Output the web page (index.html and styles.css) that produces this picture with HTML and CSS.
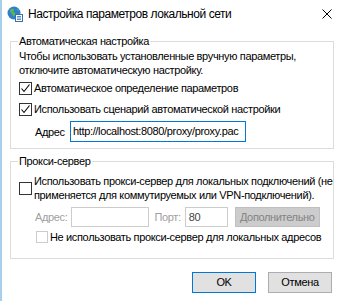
FILE: index.html
```html
<!DOCTYPE html>
<html>
<head lang="ru">
	<meta charset="UTF-8">
	<title>Настройка параметров локальной сети</title>
	<link rel="stylesheet" href="styles.css">
</head>
<body>
	<div id="window">
		<div class="titlebar">
			<svg class="app-icon" width="16" height="16" viewBox="0 0 16 16">
				<circle cx="7" cy="7" r="6.5" fill="#2f7fd0"/>
				<path d="M3 3.5c1.5-1 3-1 4 0c0.5 1-1 1.5-0.5 2.5c0.5 1 2 0.5 2 2c0 1-1 1.5-1.5 2.5c-1 0-1.5-1-1.5-2c0-1-1.5-1-2-2c-0.5-1 0-2.5-0.5-3z" fill="#5cb84a"/>
				<path d="M10 2.5c1 0.5 2 1.5 2.5 2.5c-1 0-1.5-1-2.5-1z" fill="#5cb84a"/>
				<rect x="8.5" y="8.5" width="7" height="7" fill="#fff" stroke="#3a6fb0"/>
				<path d="M10 10.5h4M10 12h4M10 13.5h4" stroke="#3a6fb0" stroke-width="0.8"/>
			</svg>
			<span class="title">Настройка параметров локальной сети</span>
			<svg class="close" width="10" height="10" viewBox="0 0 10 10">
				<path d="M0.5 0.5L9.5 9.5M9.5 0.5L0.5 9.5" stroke="#000" stroke-width="1"/>
			</svg>
		</div>

		<div class="body">
			<fieldset class="group group-auto">
				<legend>Автоматическая настройка</legend>
				<p class="note">Чтобы использовать установленные вручную параметры,<br>отключите автоматическую настройку.</p>
				<label class="check check-first">
					<span class="box">
						<svg width="11" height="11" viewBox="0 0 11 11"><path d="M1.5 5.5L4 8.5L9.5 1.5" fill="none" stroke="#000" stroke-width="1.1"/></svg>
					</span>
					<span>Автоматическое определение параметров</span>
				</label>
				<label class="check check-second">
					<span class="box">
						<svg width="11" height="11" viewBox="0 0 11 11"><path d="M1.5 5.5L4 8.5L9.5 1.5" fill="none" stroke="#000" stroke-width="1.1"/></svg>
					</span>
					<span>Использовать сценарий автоматической настройки</span>
				</label>
				<div class="addr-row">
					<span class="addr-label">Адрес</span>
					<div class="field field-focus">http://localhost:8080/proxy/proxy.pac</div>
				</div>
			</fieldset>

			<fieldset class="group group-proxy">
				<legend>Прокси-сервер</legend>
				<label class="check check-wrap">
					<span class="box"></span>
					<span>Использовать прокси-сервер для локальных подключений (не<br>применяется для коммутируемых или VPN-подключений).</span>
				</label>
				<div class="proxy-row">
					<span class="muted">Адрес:</span>
					<div class="field field-disabled field-addr"></div>
					<span class="muted">Порт:</span>
					<div class="field field-port">80</div>
					<div class="btn btn-disabled">Дополнительно</div>
				</div>
				<label class="check check-bypass">
					<span class="box box-disabled"></span>
					<span>Не использовать прокси-сервер для локальных адресов</span>
				</label>
			</fieldset>

			<div class="actions">
				<div class="btn btn-default">OK</div>
				<div class="btn">Отмена</div>
			</div>
		</div>
	</div>
</body>
</html>
```

FILE: styles.css
```css
*{
	margin: 0;
	padding: 0;
	box-sizing: border-box;
}
body{
	width: 338px;
	height: 301px;
	background: #fff;
	font-family: "Liberation Sans", Arial, sans-serif;
	font-size: 11px;
	letter-spacing: -0.35px;
	color: #000;
	overflow: hidden;
}
#window{
	height: 301px;
	border-left: 2px solid #a9d0ea;
}
.titlebar{
	height: 27px;
	display: flex;
	align-items: center;
	padding-left: 5px;
}
.app-icon{
	flex: none;
	margin-right: 5px;
}
.title{
	flex: 1;
	font-size: 12px;
	letter-spacing: -0.45px;
}
.close{
	flex: none;
	margin-right: 6px;
}
.body{
	padding: 0 4px 0 8px;
}
.group{
	border: 1px solid #dcdcdc;
	padding: 0 0 0 8px;
	margin-top: 6px;
}
.group legend{
	line-height: 16px;
	padding: 0 1px;
	margin-left: -1px;
}
.group-auto{
	padding-bottom: 6px;
}
.group-proxy{
	margin-top: 4px;
	padding-bottom: 13px;
}
.note{
	line-height: 14px;
}
.check{
	display: flex;
	align-items: center;
	line-height: 16px;
	white-space: nowrap;
}
.box{
	flex: none;
	width: 13px;
	height: 13px;
	border: 1px solid #333;
	background: #fff;
	margin-right: 2px;
	display: flex;
	align-items: center;
	justify-content: center;
}
.box-disabled{
	width: 12px;
	height: 12px;
	border-color: #cccccc;
}
.check-first{
	margin-top: 3px;
}
.check-second{
	margin-top: 5px;
}
.addr-row{
	display: flex;
	align-items: center;
	margin-top: 4px;
}
.addr-label{
	width: 51px;
	padding-left: 16px;
}
.field{
	height: 21px;
	border: 1px solid #7a7a7a;
	padding: 0 2px;
	line-height: 19px;
	white-space: nowrap;
	overflow: hidden;
}
.field-focus{
	width: 176px;
	border-color: #0078d7;
}
.check-wrap{
	margin-top: 5px;
	line-height: 14px;
}
.proxy-row{
	display: flex;
	align-items: center;
	margin-top: 5px;
	padding-left: 16px;
}
.muted{
	color: #a0a0a0;
}
.field-disabled,
.field-port{
	height: 20px;
	border-color: #cccccc;
	line-height: 18px;
}
.field-addr{
	width: 78px;
	margin: 0 5px 0 4px;
}
.field-port{
	width: 43px;
	margin-left: 4px;
	padding-left: 3px;
	color: #444;
}
.btn{
	width: 64px;
	height: 21px;
	border: 1px solid #adadad;
	background: #e1e1e1;
	text-align: center;
	line-height: 19px;
}
.btn-disabled{
	width: 85px;
	height: 20px;
	margin-left: 7px;
	background: #cccccc;
	border-color: #bfbfbf;
	color: #838383;
	line-height: 18px;
}
.check-bypass{
	margin-top: 2px;
	padding-left: 17px;
}
.actions{
	display: flex;
	justify-content: flex-end;
	gap: 12px;
	margin-top: 13px;
	padding-right: 2px;
}
.btn-default{
	border-color: #0078d7;
}
```
